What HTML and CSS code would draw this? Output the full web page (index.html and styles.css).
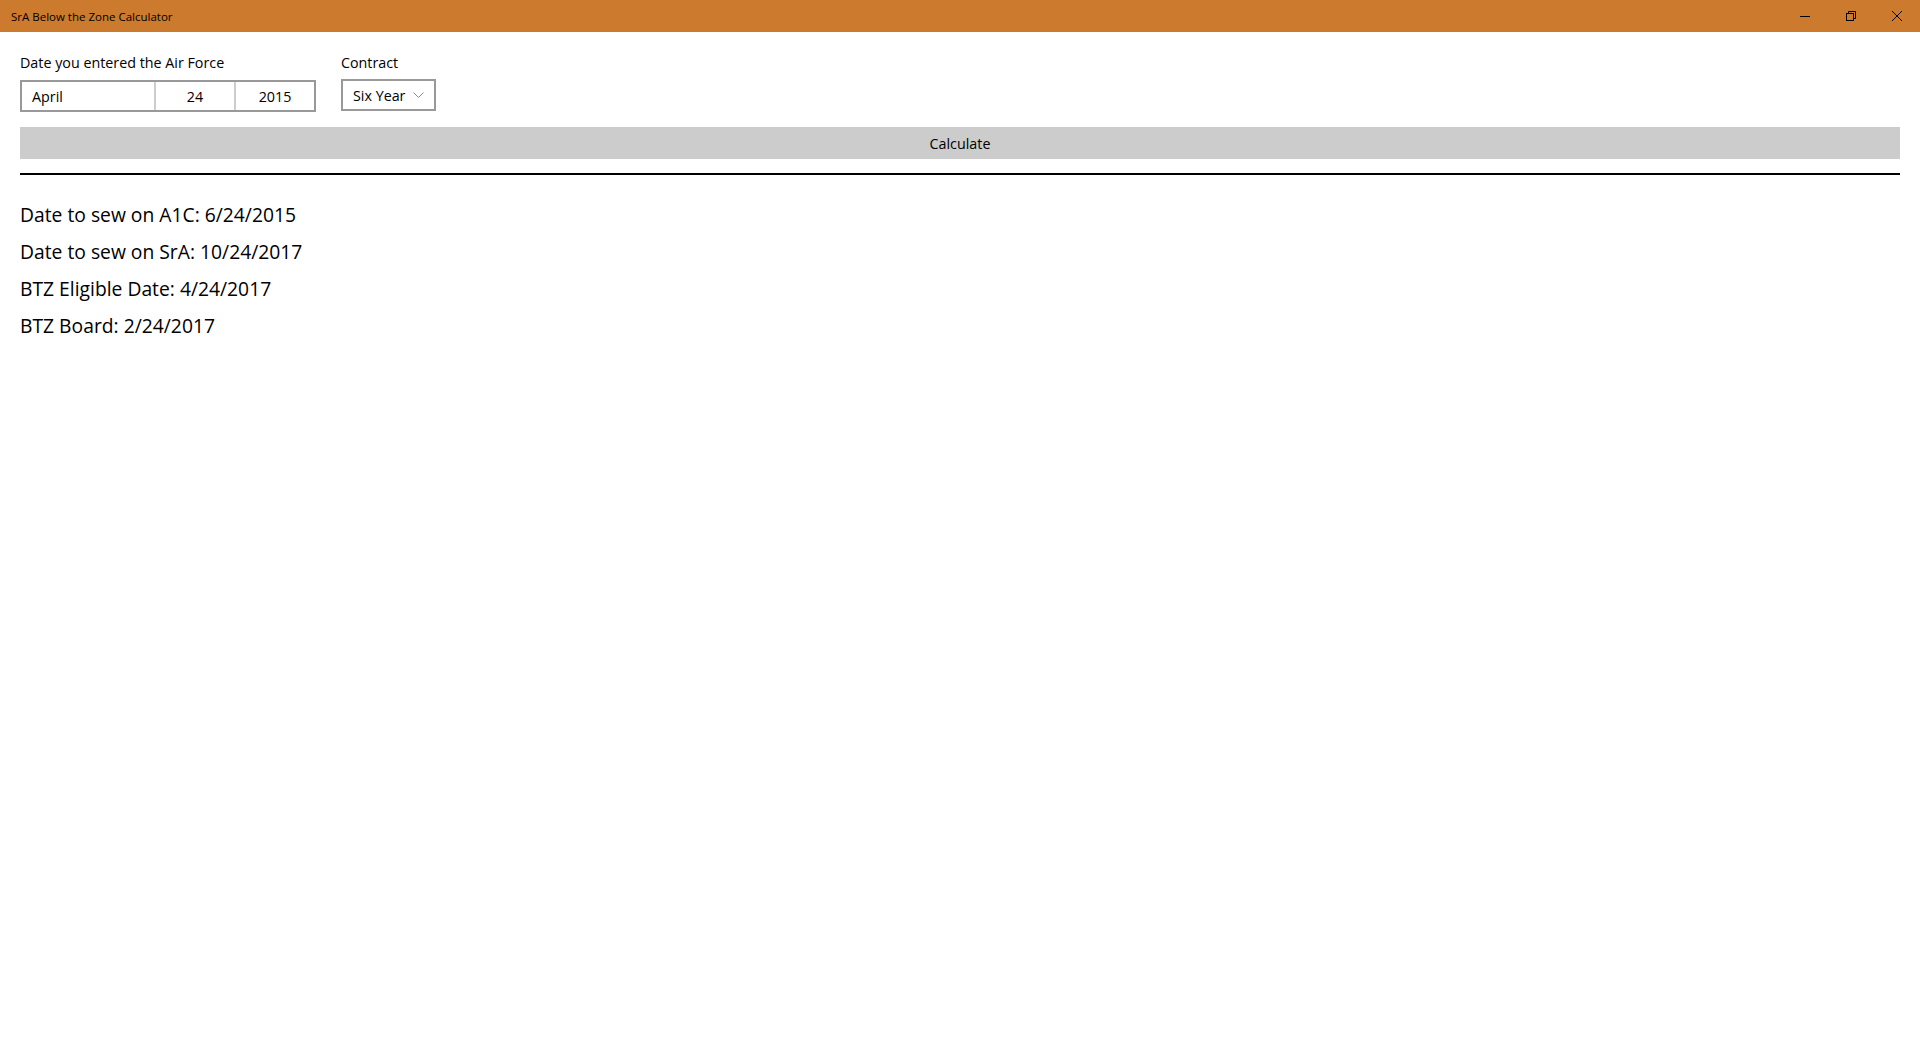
FILE: index.html
```html
<!DOCTYPE html>
<html lang="en">
<head>
<meta charset="utf-8">
<title>SrA Below the Zone Calculator</title>
<link rel="stylesheet" href="styles.css">
</head>
<body>
<div class="titlebar">
  <div class="title">SrA Below the Zone Calculator</div>
  <div class="controls">
    <div class="ctl"><svg width="10" height="10" viewBox="0 0 10 10"><line x1="0" y1="5.5" x2="10" y2="5.5" stroke="#000" stroke-width="1"/></svg></div>
    <div class="ctl"><svg width="10" height="10" viewBox="0 0 10 10"><rect x="0.5" y="2.5" width="7" height="7" fill="none" stroke="#000" stroke-width="1"/><polyline points="2.5,2.5 2.5,0.5 9.5,0.5 9.5,7.5 7.5,7.5" fill="none" stroke="#000" stroke-width="1"/></svg></div>
    <div class="ctl"><svg width="10" height="10" viewBox="0 0 10 10"><line x1="0" y1="0" x2="10" y2="10" stroke="#000" stroke-width="1"/><line x1="10" y1="0" x2="0" y2="10" stroke="#000" stroke-width="1"/></svg></div>
  </div>
</div>
<main class="content">
  <div class="form-row">
    <div class="field">
      <div class="label">Date you entered the Air Force</div>
      <div class="datepicker">
        <div class="seg seg-month">April</div>
        <div class="seg seg-day">24</div>
        <div class="seg seg-year">2015</div>
      </div>
    </div>
    <div class="field">
      <div class="label">Contract</div>
      <div class="combo">
        <span class="combo-text">Six Year</span>
        <svg class="chev" width="11" height="6" viewBox="0 0 11 6"><polyline points="0.5,0.5 5.5,5.5 10.5,0.5" fill="none" stroke="#888" stroke-width="1"/></svg>
      </div>
    </div>
  </div>
  <div class="calc-btn">Calculate</div>
  <div class="rule"></div>
  <div class="results">
    <div class="result">Date to sew on A1C: 6/24/2015</div>
    <div class="result">Date to sew on SrA: 10/24/2017</div>
    <div class="result">BTZ Eligible Date: 4/24/2017</div>
    <div class="result">BTZ Board: 2/24/2017</div>
  </div>
</main>
</body>
</html>
```

FILE: styles.css
```css
html, body {
  margin: 0;
  padding: 0;
  background: #fff;
  font-family: "Open Sans", "Noto Sans", sans-serif;
  color: #000;
}

.titlebar {
  height: 32px;
  background: #cc7a2d;
  display: flex;
  align-items: center;
  justify-content: space-between;
}

.title {
  padding-left: 11px;
  font-size: 11.5px;
  color: #000;
}

.controls {
  display: flex;
  height: 32px;
}

.ctl {
  width: 46px;
  height: 32px;
  display: flex;
  align-items: center;
  justify-content: center;
}

.ctl svg { display: block; }

.content {
  padding: 0 20px;
}

.form-row {
  display: flex;
  gap: 25px;
  padding-top: 21px;
}

.field {
  display: flex;
  flex-direction: column;
}

.label {
  font-size: 14.3px;
  line-height: 20px;
  margin-bottom: 7px;
}

.datepicker {
  display: flex;
  width: 296px;
  height: 32px;
  box-sizing: border-box;
  border: 2px solid #999;
  font-size: 14.3px;
}

.seg {
  display: flex;
  align-items: center;
  height: 100%;
  box-sizing: border-box;
}

.seg-month {
  width: 134px;
  padding-left: 10px;
  border-right: 2px solid #ccc;
}

.seg-day {
  width: 80px;
  justify-content: center;
  border-right: 2px solid #ccc;
}

.seg-year {
  flex: 1;
  justify-content: center;
}

.combo {
  display: flex;
  align-items: center;
  width: 95px;
  height: 32px;
  margin-top: -1px;
  box-sizing: border-box;
  border: 2px solid #999;
  padding-left: 10px;
  font-size: 14.3px;
}

.combo-text {
  flex: 1;
}

.chev {
  display: block;
  margin-right: 10px;
}

.calc-btn {
  margin-top: 15px;
  height: 32px;
  background: #cccccc;
  display: flex;
  align-items: center;
  justify-content: center;
  font-size: 14.3px;
}

.rule {
  margin-top: 14px;
  height: 2px;
  background: #000;
}

.results {
  margin-top: 21px;
}

.result {
  font-size: 19.3px;
  line-height: 37px;
}
```
